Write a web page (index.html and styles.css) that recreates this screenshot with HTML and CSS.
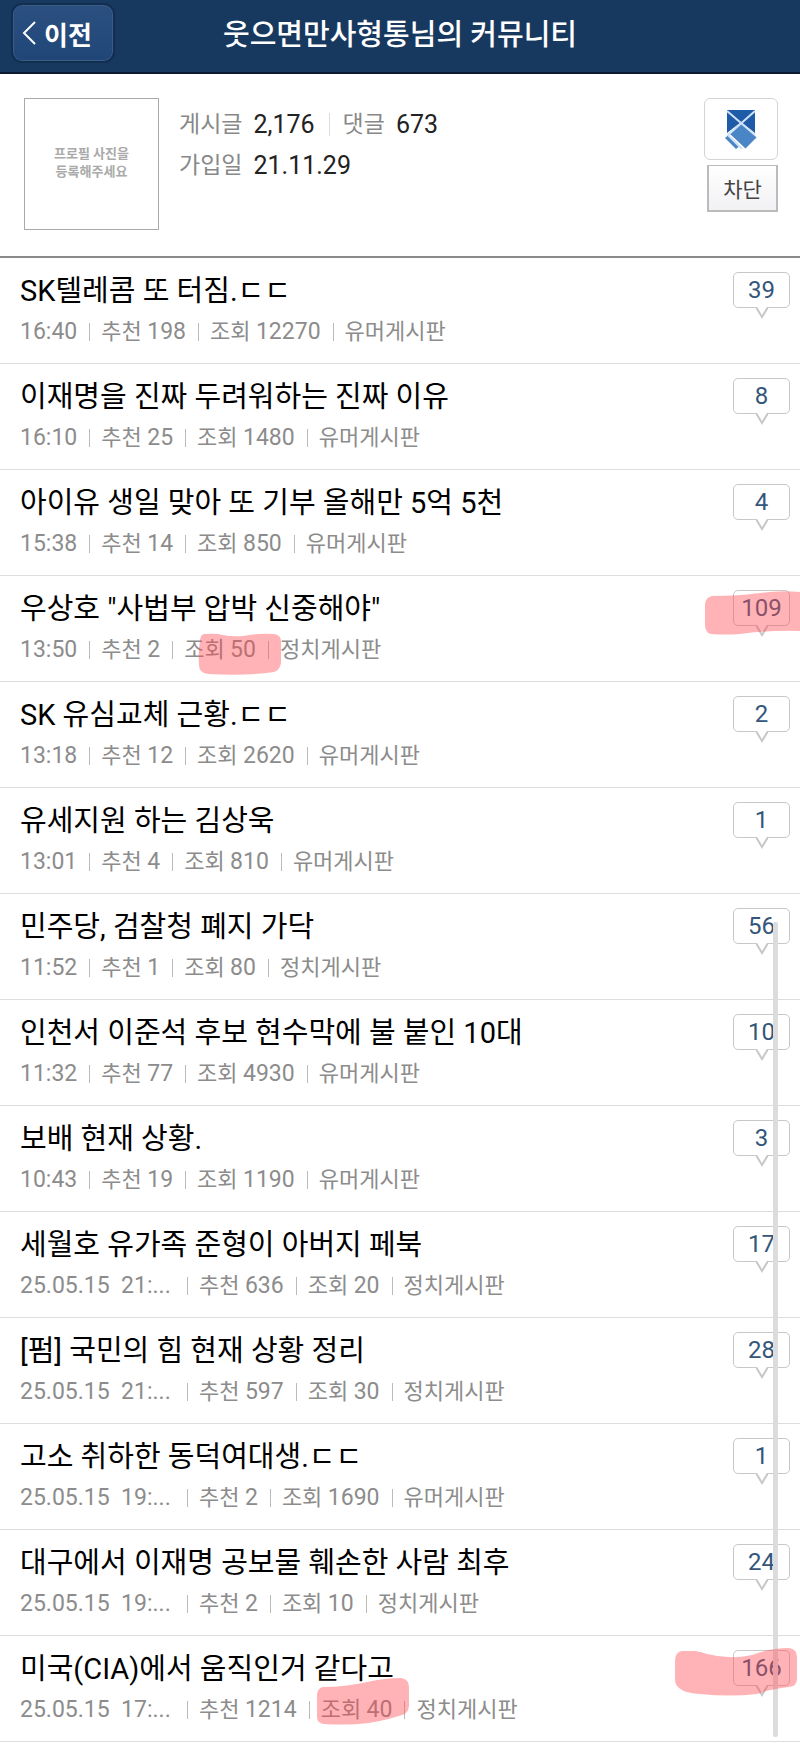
FILE: index.html
```html
<!DOCTYPE html>
<html lang="ko">
  <head>
    <meta charset="UTF-8" />
    <meta name="viewport" content="width=device-width, initial-scale=1.0" />
    <title>웃으면만사형통님의 커뮤니티</title>
    <link rel="stylesheet" href="styles.css">
  </head>
  <body>
    <header class="topbar">
      <button class="back" type="button">
        <svg width="14" height="24" viewBox="0 0 14 24" aria-hidden="true">
          <path d="M13 1 L2 12 L13 23" fill="none" stroke="currentColor" stroke-width="2" />
        </svg>
        이전
      </button>
      <h1>웃으면만사형통님의 커뮤니티</h1>
    </header>

    <section class="profile">
      <div class="avatar">프로필 사진을<br>등록해주세요</div>
      <dl class="stats">
        <div class="stats-row">
          <div class="stat"><dt>게시글</dt><dd>2,176</dd></div>
          <div class="stat"><dt>댓글</dt><dd>673</dd></div>
        </div>
        <div class="stats-row">
          <div class="stat"><dt>가입일</dt><dd>21.11.29</dd></div>
        </div>
      </dl>
      <div class="actions">
        <button class="emblem" type="button" aria-label="등급">
          <svg width="32" height="40" viewBox="0 0 32 40" aria-hidden="true">
            <path d="M2 1h28v23L16 13 2 24z" fill="#1f5ca8" />
            <path d="M16 13 31.500 28.500 20.500 39.500 4.500 24.500z" fill="#4a86c6" />
            <path d="M3.500 26 14.500 37 11 40 0 29z" fill="#4a86c6" />
            <path d="M2 2 30 26M30 2 3 26l14 14" fill="none" stroke="#cfe2f7" stroke-width="2" />
          </svg>
        </button>
        <button class="block" type="button">차단</button>
      </div>
    </section>

    <main class="board">
      <ul class="posts">
        <li class="post">
          <div class="text">
            <a class="title" href="#">SK텔레콤 또 터짐.ㄷㄷ</a>
            <div class="meta"><span class="num">16:40</span><span>추천 <b class="num">198</b></span><span>조회 <b class="num">12270</b></span><span>유머게시판</span></div>
          </div>
          <a class="count" href="#">39<svg class="tail" width="12" height="12" viewBox="0 0 12 12"><path d="M0 0 6 10 12 0" /></svg></a>
        </li>
        <li class="post">
          <div class="text">
            <a class="title" href="#">이재명을 진짜 두려워하는 진짜 이유</a>
            <div class="meta"><span class="num">16:10</span><span>추천 <b class="num">25</b></span><span>조회 <b class="num">1480</b></span><span>유머게시판</span></div>
          </div>
          <a class="count" href="#">8<svg class="tail" width="12" height="12" viewBox="0 0 12 12"><path d="M0 0 6 10 12 0" /></svg></a>
        </li>
        <li class="post">
          <div class="text">
            <a class="title" href="#">아이유 생일 맞아 또 기부 올해만 5억 5천</a>
            <div class="meta"><span class="num">15:38</span><span>추천 <b class="num">14</b></span><span>조회 <b class="num">850</b></span><span>유머게시판</span></div>
          </div>
          <a class="count" href="#">4<svg class="tail" width="12" height="12" viewBox="0 0 12 12"><path d="M0 0 6 10 12 0" /></svg></a>
        </li>
        <li class="post">
          <div class="text">
            <a class="title" href="#">우상호 "사법부 압박 신중해야"</a>
            <div class="meta"><span class="num">13:50</span><span>추천 <b class="num">2</b></span><span>조회 <b class="num">50</b></span><span>정치게시판</span></div>
          </div>
          <a class="count" href="#">109<svg class="tail" width="12" height="12" viewBox="0 0 12 12"><path d="M0 0 6 10 12 0" /></svg></a>
          <svg class="marker marker-views" width="84" height="43" viewBox="0 0 84 43" aria-hidden="true">
            <path d="M6 1Q18 0 25 2Q35 4 45 3Q60 0 76 1Q83 2 83 8V30Q82 37 76 39Q50 43 10 41Q1 40 1 32Q0 18 2 8Q2 2 6 1Z" />
          </svg>
          <svg class="marker marker-count" width="95" height="45" viewBox="0 0 95 45" aria-hidden="true">
            <path d="M7 6Q35 6 55 3Q75 0 95 2V41Q65 40 35 44Q20 45 6 44Q1 43 0 36V14Q1 7 7 6Z" />
          </svg>
        </li>
        <li class="post">
          <div class="text">
            <a class="title" href="#">SK 유심교체 근황.ㄷㄷ</a>
            <div class="meta"><span class="num">13:18</span><span>추천 <b class="num">12</b></span><span>조회 <b class="num">2620</b></span><span>유머게시판</span></div>
          </div>
          <a class="count" href="#">2<svg class="tail" width="12" height="12" viewBox="0 0 12 12"><path d="M0 0 6 10 12 0" /></svg></a>
        </li>
        <li class="post">
          <div class="text">
            <a class="title" href="#">유세지원 하는 김상욱</a>
            <div class="meta"><span class="num">13:01</span><span>추천 <b class="num">4</b></span><span>조회 <b class="num">810</b></span><span>유머게시판</span></div>
          </div>
          <a class="count" href="#">1<svg class="tail" width="12" height="12" viewBox="0 0 12 12"><path d="M0 0 6 10 12 0" /></svg></a>
        </li>
        <li class="post">
          <div class="text">
            <a class="title" href="#">민주당, 검찰청 폐지 가닥</a>
            <div class="meta"><span class="num">11:52</span><span>추천 <b class="num">1</b></span><span>조회 <b class="num">80</b></span><span>정치게시판</span></div>
          </div>
          <a class="count" href="#">56<svg class="tail" width="12" height="12" viewBox="0 0 12 12"><path d="M0 0 6 10 12 0" /></svg></a>
        </li>
        <li class="post">
          <div class="text">
            <a class="title" href="#">인천서 이준석 후보 현수막에 불 붙인 10대</a>
            <div class="meta"><span class="num">11:32</span><span>추천 <b class="num">77</b></span><span>조회 <b class="num">4930</b></span><span>유머게시판</span></div>
          </div>
          <a class="count" href="#">10<svg class="tail" width="12" height="12" viewBox="0 0 12 12"><path d="M0 0 6 10 12 0" /></svg></a>
        </li>
        <li class="post">
          <div class="text">
            <a class="title" href="#">보배 현재 상황.</a>
            <div class="meta"><span class="num">10:43</span><span>추천 <b class="num">19</b></span><span>조회 <b class="num">1190</b></span><span>유머게시판</span></div>
          </div>
          <a class="count" href="#">3<svg class="tail" width="12" height="12" viewBox="0 0 12 12"><path d="M0 0 6 10 12 0" /></svg></a>
        </li>
        <li class="post">
          <div class="text">
            <a class="title" href="#">세월호 유가족 준형이 아버지 페북</a>
            <div class="meta"><span class="num date">25.05.15&nbsp; 21:...</span><span>추천 <b class="num">636</b></span><span>조회 <b class="num">20</b></span><span>정치게시판</span></div>
          </div>
          <a class="count" href="#">17<svg class="tail" width="12" height="12" viewBox="0 0 12 12"><path d="M0 0 6 10 12 0" /></svg></a>
        </li>
        <li class="post">
          <div class="text">
            <a class="title" href="#">[펌] 국민의 힘 현재 상황 정리</a>
            <div class="meta"><span class="num date">25.05.15&nbsp; 21:...</span><span>추천 <b class="num">597</b></span><span>조회 <b class="num">30</b></span><span>정치게시판</span></div>
          </div>
          <a class="count" href="#">28<svg class="tail" width="12" height="12" viewBox="0 0 12 12"><path d="M0 0 6 10 12 0" /></svg></a>
        </li>
        <li class="post">
          <div class="text">
            <a class="title" href="#">고소 취하한 동덕여대생.ㄷㄷ</a>
            <div class="meta"><span class="num date">25.05.15&nbsp; 19:...</span><span>추천 <b class="num">2</b></span><span>조회 <b class="num">1690</b></span><span>유머게시판</span></div>
          </div>
          <a class="count" href="#">1<svg class="tail" width="12" height="12" viewBox="0 0 12 12"><path d="M0 0 6 10 12 0" /></svg></a>
        </li>
        <li class="post">
          <div class="text">
            <a class="title" href="#">대구에서 이재명 공보물 훼손한 사람 최후</a>
            <div class="meta"><span class="num date">25.05.15&nbsp; 19:...</span><span>추천 <b class="num">2</b></span><span>조회 <b class="num">10</b></span><span>정치게시판</span></div>
          </div>
          <a class="count" href="#">24<svg class="tail" width="12" height="12" viewBox="0 0 12 12"><path d="M0 0 6 10 12 0" /></svg></a>
        </li>
        <li class="post">
          <div class="text">
            <a class="title" href="#">미국(CIA)에서 움직인거 같다고</a>
            <div class="meta"><span class="num date">25.05.15&nbsp; 17:...</span><span>추천 <b class="num">1214</b></span><span>조회 <b class="num">40</b></span><span>정치게시판</span></div>
          </div>
          <a class="count" href="#">166<svg class="tail" width="12" height="12" viewBox="0 0 12 12"><path d="M0 0 6 10 12 0" /></svg></a>
          <svg class="marker marker-views-last" width="92" height="48" viewBox="0 0 92 48" aria-hidden="true">
            <path d="M6 9Q28 9 50 4Q68 0 84 0Q92 1 92 9V28Q91 36 85 37Q60 45 42 46Q22 47 7 46Q0 45 0 39V16Q1 10 6 9Z" />
          </svg>
          <svg class="marker marker-count-last" width="123" height="49" viewBox="0 0 123 49" aria-hidden="true">
            <path d="M7 3H20Q27 4 32 6Q55 12 77 7Q95 0 114 0Q122 1 122 9V31Q122 38 114 39Q95 41 82 46Q55 49 25 46Q12 45 7 42Q0 38 0 32V13Q0 4 7 3Z" />
          </svg>
        </li>
      </ul>
      <div class="scrollbar"></div>
    </main>
  </body>
</html>
```
FILE: styles.css
```css
* {
  box-sizing: border-box;
}
body {
  margin: 0;
  background: #fff;
  color: #111;
  font-family: Roboto, "Noto Sans CJK KR", sans-serif;
}
a {
  color: inherit;
  text-decoration: none;
}
button {
  font-family: inherit;
  cursor: pointer;
}

/* top bar */
.topbar {
  display: grid;
  grid-template-columns: 104px 1fr 104px;
  align-items: center;
  height: 74px;
  padding: 0 11px 6px;
  background: #18395f;
  border-bottom: 2px solid #0b1a2e;
  color: #fff;
}
.topbar h1 {
  margin: 0;
  padding-top: 3px;
  font-size: 29px;
  font-weight: 500;
  line-height: 40px;
  text-align: center;
  white-space: nowrap;
}
.back {
  display: flex;
  align-items: center;
  gap: 8px;
  height: 60px;
  padding: 0 9px;
  border: 2px solid #122e50;
  border-radius: 11px;
  background: linear-gradient(#2b5080, #204678);
  box-shadow: inset 0 0 0 1px #3b5c86;
  color: #fff;
  font-size: 26px;
  font-weight: 700;
}

/* profile */
.profile {
  display: flex;
  align-items: flex-start;
  height: 184px;
  padding: 24px 22px 0 24px;
  border-bottom: 2px solid #8a8a8a;
}
.avatar {
  width: 135px;
  height: 132px;
  padding-top: 46px;
  border: 1px solid #aaa;
  color: #aaa;
  font-size: 13px;
  font-weight: 700;
  line-height: 18px;
  text-align: center;
}
.stats {
  flex: 1;
  margin: 6px 0 0 20px;
  font-size: 25px;
  line-height: 41px;
}
.stats-row,
.stat {
  display: flex;
  align-items: center;
}
.stat + .stat::before {
  content: "";
  width: 1px;
  height: 23px;
  margin: 0 13px 0 14px;
  background: #ddd;
}
.stat dt {
  color: #888;
  font-size: 23px;
}
.stat dd {
  margin: 0 0 0 11px;
  color: #222;
}
.actions {
  display: flex;
  flex-direction: column;
  align-items: flex-end;
  gap: 5px;
}
.emblem {
  display: flex;
  align-items: center;
  justify-content: center;
  width: 74px;
  height: 62px;
  padding: 0;
  border: 1px solid #d4d4d4;
  border-radius: 6px;
  background: #fff;
}
.block {
  width: 71px;
  height: 47px;
  padding: 0;
  border: 2px solid #bbb;
  border-top-width: 1px;
  background: linear-gradient(#fff, #f1f1f4);
  color: #444;
  font-size: 21px;
}

/* post list */
.board {
  position: relative;
}
.posts {
  margin: 0;
  padding: 0;
  list-style: none;
}
.post {
  position: relative;
  display: flex;
  align-items: flex-start;
  justify-content: space-between;
  height: 106px;
  padding: 13px 10px 0 20px;
  border-bottom: 1px solid #ddd;
}
.title {
  display: block;
  color: #000;
  font-size: 29px;
  line-height: 40px;
}
.meta {
  display: flex;
  align-items: center;
  margin-top: 6px;
  color: #8c8c8c;
  font-size: 22px;
  line-height: 30px;
  white-space: nowrap;
}
.meta span + span::before {
  content: "";
  display: inline-block;
  width: 1px;
  height: 18px;
  margin: 0 11px 0 12px;
  background: #bbb;
  vertical-align: -2px;
}
.num {
  font-size: 23px;
  font-weight: 400;
}
.meta .date {
  width: 155px;
}
.count {
  position: relative;
  width: 57px;
  height: 36px;
  margin-top: 1px;
  border: 1px solid #c8c8c8;
  border-radius: 5px;
  background: #fff;
  color: #34567a;
  font-size: 24px;
  line-height: 34px;
  text-align: center;
}
.tail {
  position: absolute;
  top: 34px;
  left: 22px;
  fill: #fff;
  stroke: #c8c8c8;
  stroke-width: 2;
}

/* highlighter strokes */
.marker {
  position: absolute;
  z-index: 2;
  fill: rgba(255, 75, 80, 0.42);
  pointer-events: none;
}
.marker-views {
  top: 57px;
  left: 198px;
}
.marker-count {
  top: 14px;
  right: 0;
}
.marker-views-last {
  top: 42px;
  left: 317px;
}
.marker-count-last {
  top: 12px;
  right: 2px;
}
.scrollbar {
  position: absolute;
  z-index: 1;
  top: 664px;
  right: 22px;
  bottom: 5px;
  width: 5px;
  border-radius: 2px;
  background: #dcdcdc;
}
```
